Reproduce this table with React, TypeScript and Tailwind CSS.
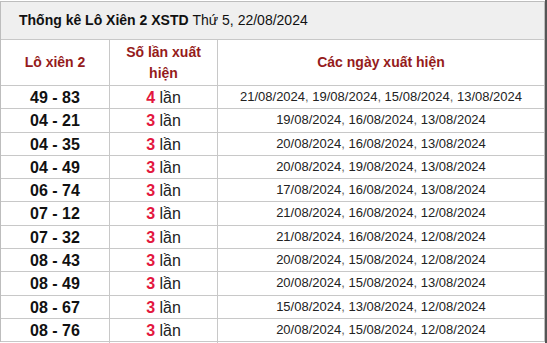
const rows: { pair: string; count: number; dates: string[] }[] = [
  { pair: "49 - 83", count: 4, dates: ["21/08/2024", "19/08/2024", "15/08/2024", "13/08/2024"] },
  { pair: "04 - 21", count: 3, dates: ["19/08/2024", "16/08/2024", "13/08/2024"] },
  { pair: "04 - 35", count: 3, dates: ["20/08/2024", "16/08/2024", "13/08/2024"] },
  { pair: "04 - 49", count: 3, dates: ["20/08/2024", "19/08/2024", "13/08/2024"] },
  { pair: "06 - 74", count: 3, dates: ["17/08/2024", "16/08/2024", "13/08/2024"] },
  { pair: "07 - 12", count: 3, dates: ["21/08/2024", "16/08/2024", "12/08/2024"] },
  { pair: "07 - 32", count: 3, dates: ["21/08/2024", "16/08/2024", "12/08/2024"] },
  { pair: "08 - 43", count: 3, dates: ["20/08/2024", "15/08/2024", "12/08/2024"] },
  { pair: "08 - 49", count: 3, dates: ["20/08/2024", "15/08/2024", "13/08/2024"] },
  { pair: "08 - 67", count: 3, dates: ["15/08/2024", "13/08/2024", "12/08/2024"] },
  { pair: "08 - 76", count: 3, dates: ["20/08/2024", "15/08/2024", "12/08/2024"] },
];

const Dates = ({ dates }: { dates: string[] }) => (
  <>
    {dates.map((d, i) => (
      <span key={i}>
        {d}
        {i < dates.length - 1 && <span className="text-[#666]">,&nbsp;</span>}
      </span>
    ))}
  </>
);

export default function App() {
  return (
    <div className="flex h-[343px] w-[547px] overflow-hidden bg-white font-['Liberation_Sans',Arial,sans-serif]">
      <div className="w-[545px] pt-[1px]">
        <div className="border-l border-t border-r border-[#bdbdbd]">
          <div className="flex h-[38px] items-center border-b border-[#c8c8c8] bg-[#efefef] pl-[18px] text-[14px] text-[#111]">
            <span className="font-bold">Thống kê Lô Xiên 2 XSTD</span>
            <span>&nbsp;Thứ 5, 22/08/2024</span>
          </div>
          <div className="grid h-[46px] grid-cols-[109px_108px_1fr] border-b border-[#c8c8c8] text-[14px] font-bold text-[#951b1b]">
            <div className="flex items-center justify-center border-r border-[#c8c8c8]">Lô xiên 2</div>
            <div className="flex items-center justify-center border-r border-[#c8c8c8] px-2 text-center leading-[21px]">
              Số lần xuất hiện
            </div>
            <div className="flex items-center justify-center">Các ngày xuất hiện</div>
          </div>
          {rows.map((r) => (
            <div
              key={r.pair}
              className="grid h-[23.3px] grid-cols-[109px_108px_1fr] border-b border-[#c8c8c8]"
            >
              <div className="flex items-center justify-center border-r border-[#c8c8c8] text-[16px] font-bold text-[#111]">
                {r.pair}
              </div>
              <div className="flex items-center justify-center border-r border-[#c8c8c8] text-[16px] text-[#222]">
                <span className="font-bold text-[#e3173e]">{r.count}</span>
                <span>&nbsp;lần</span>
              </div>
              <div className="text-center text-[13px] leading-[22px] text-[#222]">
                <Dates dates={r.dates} />
              </div>
            </div>
          ))}
        </div>
      </div>
      <div className="w-[2px] bg-[#555]" />
    </div>
  );
}
